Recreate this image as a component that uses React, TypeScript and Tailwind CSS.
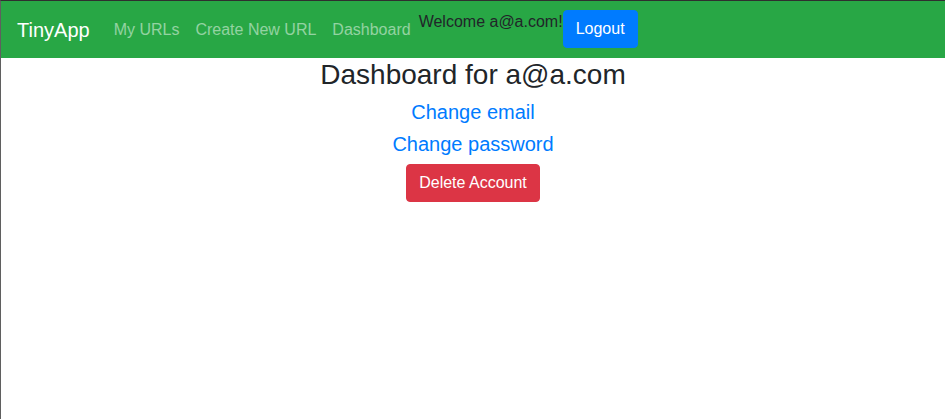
export default function App() {
    return (
        <div
            className="min-h-[419px] border-t border-l border-t-[#2f2f2f] border-l-[#5f5f5f] bg-white text-[#212529]"
            style={{ fontFamily: '"Liberation Sans", Arial, sans-serif' }}
        >
            <nav className="flex h-[57px] items-start bg-[#28a745] px-4 pt-[9px] pb-2">
                <a className="mr-4 py-[5px] text-[20px] leading-[30px] text-white">
                    TinyApp
                </a>
                <ul className="flex">
                    <li>
                        <a className="block p-2 text-[16px] leading-6 text-white/50">
                            My URLs
                        </a>
                    </li>
                    <li>
                        <a className="block p-2 text-[16px] leading-6 text-white/50">
                            Create New URL
                        </a>
                    </li>
                    <li>
                        <a className="block p-2 text-[16px] leading-6 text-white/50">
                            Dashboard
                        </a>
                    </li>
                </ul>
                <span className="text-[16px] leading-6 text-[#212529]">
                    Welcome a@a.com!
                </span>
                <button className="rounded border border-[#007bff] bg-[#007bff] px-3 py-[6px] text-[16px] leading-6 text-white">
                    Logout
                </button>
            </nav>
            <main className="flex flex-col items-center">
                <h3 className="mb-2 text-[28px] leading-[1.2] font-medium">
                    Dashboard for a@a.com
                </h3>
                <h5 className="mb-2 text-[20px] leading-[1.2] font-medium">
                    <a className="text-[#007bff]">Change email</a>
                </h5>
                <h5 className="mb-2 text-[20px] leading-[1.2] font-medium">
                    <a className="text-[#007bff]">Change password</a>
                </h5>
                <button className="rounded border border-[#dc3545] bg-[#dc3545] px-3 py-[6px] text-[16px] leading-6 text-white">
                    Delete Account
                </button>
            </main>
        </div>
    );
}
